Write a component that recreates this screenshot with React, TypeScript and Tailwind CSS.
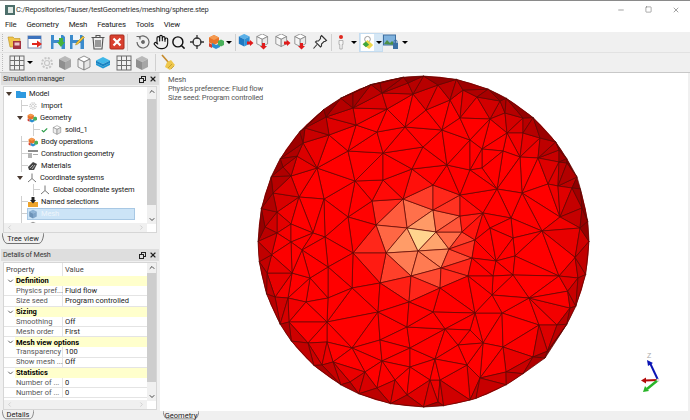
import { Hand, Search, ChevronDown, ChevronUp, ChevronLeft, ChevronRight, X, Check, Minus, Square } from "lucide-react";
import type { ReactNode } from "react";

type P = [number, number];

const CX = 423.5;
const CY = 241.5;
const R = 165.5;

// vertices read off the reference
const seed: P[] = [
	[407,228],[433,210],[403,199],[372,201],[376,225],[386,253],[418,251],[436,232],[449,249],[441,268],[411,276],[460,216],[462,232],[472,258],[468,276],[433,185],[383,180],[353,253],[380,283],[440,288],[460,195],[475,240],
	[355,181],[324,199],[299,197],[348,217],[325,237],[291,224],[277,212],[291,176],[317,168],[348,151],[383,153],[412,169],[447,165],[423,147],[405,127],[377,132],[356,125],[329,135],[303,143],[283,167],[387,109],[353,108],[326,117],[305,128],[426,110],[442,130],[460,118],[413,94],[382,93],[353,93],[438,85],[408,83],[380,83],[450,100],[463,90],[277,233],[265,227],[273,193],[291,242],[313,233],
	[490,119],[505,113],[477,97],[500,101],[523,118],[507,133],[523,133],[540,138],[559,150],[538,158],[520,157],[503,151],[482,149],[470,140],[482,168],[522,193],[548,184],[558,186],[559,162],[572,188],[577,177],[567,163],[560,217],[582,208],[511,218],[542,231],[497,189],[483,213],[470,170],[490,228],[513,238],[580,228],
	[496,261],[515,256],[493,276],[529,298],[559,276],[578,278],[513,275],[502,313],[475,313],[483,343],[503,347],[539,325],[557,325],[570,308],[533,357],[506,372],[480,378],[470,400],[492,295],[545,358],
	[378,312],[352,288],[328,267],[328,298],[310,278],[292,273],[288,298],[275,297],[306,302],[327,322],[289,322],[352,348],[380,340],[407,327],[410,348],[382,361],[410,367],[435,359],[445,329],[433,312],[409,302],[458,345],[470,330],[327,342],[308,343],[333,362],[350,382],[365,372],[395,380],[430,380],[377,388],[407,395],[438,402],[322,365],[302,250],[467,365],[267,273],[440,380],
];

const near = (list: P[], p: P, d: number) => list.some((q) => Math.hypot(q[0] - p[0], q[1] - p[1]) < d);

function buildPoints(): P[] {
	const pts: P[] = [];
	for (const p of seed) if (!near(pts, p, 3)) pts.push(p);
	for (let a = 0; a < 360; a += 13) {
		const t = ((a + 6) * Math.PI) / 180;
		const p: P = [CX + (R - 13) * Math.cos(t), CY + (R - 13) * Math.sin(t)];
		if (!near(pts, p, 14)) pts.push(p);
	}
	for (let a = 0; a < 360; a += 10) {
		const t = ((a + ((a / 10) % 3) * 1.5) * Math.PI) / 180;
		pts.push([CX + R * Math.cos(t), CY + R * Math.sin(t)]);
	}
	return pts;
}

function triangulate(pts: P[]) {
	const n = pts.length;
	const all: P[] = [...pts, [-3000, -3000], [4000, -3000], [500, 5000]];
	let tris: number[][] = [[n, n + 1, n + 2]];
	const inCircle = (t: number[], p: P) => {
		const [a, b, c] = t.map((i) => all[i]);
		const ax = a[0] - p[0], ay = a[1] - p[1];
		const bx = b[0] - p[0], by = b[1] - p[1];
		const cx = c[0] - p[0], cy = c[1] - p[1];
		const det = (ax * ax + ay * ay) * (bx * cy - cx * by) - (bx * bx + by * by) * (ax * cy - cx * ay) + (cx * cx + cy * cy) * (ax * by - bx * ay);
		const area = (b[0] - a[0]) * (c[1] - a[1]) - (b[1] - a[1]) * (c[0] - a[0]);
		return area > 0 ? det > 0 : det < 0;
	};
	for (let i = 0; i < n; i++) {
		const bad = tris.filter((t) => inCircle(t, all[i]));
		const edges = new Map<string, number[]>();
		for (const t of bad) {
			for (const [u, v] of [[t[0], t[1]], [t[1], t[2]], [t[2], t[0]]]) {
				const k = u < v ? `${u}-${v}` : `${v}-${u}`;
				if (edges.has(k)) edges.delete(k);
				else edges.set(k, [u, v]);
			}
		}
		tris = tris.filter((t) => !bad.includes(t));
		edges.forEach(([u, v]) => tris.push([u, v, i]));
	}
	return tris.filter((t) => t.every((i) => i < n));
}

const mix = (a: number, b: number, k: number) => Math.round(a + (b - a) * k);

function shade(x: number, y: number, i: number) {
	const d = Math.min(1, Math.hypot(x - CX, y - CY) / R);
	const nz = Math.sqrt(1 - d * d);
	const top = y < CY ? 0.15 * (1 - nz) : 0;
	let v = 0.55 + 0.85 * nz - top + (((i * 37) % 11) - 5) * 0.004;
	v = Math.min(1, v);
	const s = Math.max(0, 1 - Math.hypot(x - 420, y - 240) / 62);
	const k = Math.pow(s, 1.15);
	return `rgb(${mix(255 * v, 255, Math.min(1, k * 2))},${mix(0, 225, k)},${mix(0, 150, k)})`;
}

const meshPoints = buildPoints();
const meshTris = triangulate(meshPoints);

function Sphere() {
	return (
		<svg className="absolute left-0 top-0" width="528" height="338" viewBox="160 73 528 338">
			<circle cx={CX} cy={CY} r={R} fill="#b00000" />
			{meshTris.map((t, i) => {
				const [a, b, c] = t.map((j) => meshPoints[j]);
				return (
					<polygon
						key={i}
						points={`${a[0]},${a[1]} ${b[0]},${b[1]} ${c[0]},${c[1]}`}
						fill={shade((a[0] + b[0] + c[0]) / 3, (a[1] + b[1] + c[1]) / 3, i)}
						stroke="#5c0a06"
						strokeWidth="0.7"
						strokeLinejoin="round"
					/>
				);
			})}
		</svg>
	);
}

function Triad() {
	return (
		<svg className="absolute left-[476px] top-[277px]" width="32" height="46" viewBox="0 0 32 46">
			<text x="11" y="8" fontSize="7" fill="#aaa" fontFamily="Liberation Sans, sans-serif">Z</text>
			<path d="M22 30 L14 13" stroke="#0a14b4" strokeWidth="2" />
			<path d="M11 10 L17 13 L12 16Z" fill="#0a14b4" />
			<path d="M22 30 L9 30.500" stroke="#b40a0a" strokeWidth="2" />
			<path d="M5 30.500 L10 27.500 L10 33.500Z" fill="#b40a0a" />
			<path d="M22 30 L11 39" stroke="#28b428" strokeWidth="2.500" />
			<path d="M7 42 L9 36 L13 41Z" fill="#28b428" />
			<circle cx="22" cy="30" r="1.500" fill="#ddd" />
		</svg>
	);
}

const Floppy = ({ children }: { children: ReactNode }) => (
	<svg width="16" height="16" viewBox="0 0 16 16">
		<path d="M1 1h12l2 2v12H1z" fill="#3b8bcc" />
		<rect x="4" y="1" width="7" height="5" fill="#eef5fb" />
		<rect x="3.500" y="9" width="8" height="6" fill="#e2edf7" />
		{children}
	</svg>
);

const Cube = ({ top, left, right, wire }: { top: string; left: string; right: string; wire?: boolean }) => (
	<g stroke={wire ? "#777" : "none"} strokeWidth="0.8">
		<path d="M8 1l6 3-6 3-6-3z" fill={top} />
		<path d="M2 4l6 3v8l-6-3z" fill={left} />
		<path d="M14 4l-6 3v8l6-3z" fill={right} />
	</g>
);

const CubeIcon = (props: { top: string; left: string; right: string; wire?: boolean; size?: number }) => (
	<svg width={props.size ?? 16} height={props.size ?? 16} viewBox="0 0 16 16">
		<Cube {...props} />
	</svg>
);

const Blocks = ({ size = 16 }: { size?: number }) => (
	<svg width={size} height={size} viewBox="0 0 16 16">
		<path d="M6 1l5 2.500v5L6 11 1 8.500v-5z" fill="#e8742a" />
		<path d="M1 3.500l5 2.500 5-2.500-5-2.500z" fill="#f59a4f" />
		<path d="M4 9l4 2v4l-4-2zM8 11l4-2v4l-4 2z" fill="#2b8fd0" />
		<path d="M10 7l3-1.500L16 7v4l-3 1.500L10 11z" fill="#49b05a" />
		<path d="M1 9l3 1.500V14l-3-1.500z" fill="#d33c30" />
	</svg>
);

const GridIcon = () => (
	<svg width="16" height="16" viewBox="0 0 16 16" fill="none" stroke="#6d6d6d" strokeWidth="1">
		<rect x="1" y="1" width="14" height="14" />
		<path d="M5.500 1v14M10.500 1v14M1 5.500h14M1 10.500h14" />
	</svg>
);

const GrayCube = () => <CubeIcon top="#b9b9b9" left="#8f8f8f" right="#a6a6a6" />;

const Gear = ({ size = 16 }: { size?: number }) => (
	<svg width={size} height={size} viewBox="0 0 16 16" fill="none" stroke="#c6c6c6" strokeWidth="1.200">
		<circle cx="8" cy="8" r="2.500" />
		<circle cx="8" cy="8" r="5" strokeDasharray="2 1.400" strokeWidth="2" />
	</svg>
);

const ArrowCube = ({ solid, down }: { solid?: boolean; down?: boolean }) => (
	<svg width="16" height="16" viewBox="0 0 16 16">
		<g transform="translate(-1 -1) scale(0.9)">
			{solid ? (
				<Cube top="#5ab0e8" left="#1e78c2" right="#2f91d6" />
			) : (
				<Cube top="#fff" left="#f4f4f4" right="#e8e8e8" wire />
			)}
		</g>
		{down ? (
			<path d="M6 9h3v3h2l-3.500 3.500L4 12h2z" fill="#e01a1a" />
		) : (
			<path d="M9 7.500h3V6l3.500 3L12 12v-1.500H9z" fill="#e01a1a" />
		)}
	</svg>
);

const Caret = ({ className = "" }: { className?: string }) => (
	<span className={`h-0 w-0 border-x-[3px] border-t-[3px] border-x-transparent border-t-black ${className}`} />
);

const Sep = ({ className = "" }: { className?: string }) => <span className={`h-[17px] w-px bg-[#d0d0d0] ${className}`} />;

const Grip = () => <span className="ml-[2px] h-[17px] w-[2px] border-l border-dotted border-[#bbb]" />;

function ToolbarOne() {
	return (
		<div className="flex h-[20px] items-center bg-[#f0f0f0]">
			<Grip />
			<svg className="ml-[3px]" width="16" height="16" viewBox="0 0 16 16">
				<path d="M1 3h5l1.500 1.500H13V13H3z" fill="#f1c64c" stroke="#b98f20" strokeWidth="0.600" />
				<rect x="6" y="7" width="8" height="8" fill="#a3323f" />
				<rect x="7.500" y="8.500" width="5" height="3" fill="#ecc7cc" />
			</svg>
			<svg className="ml-[4px]" width="16" height="16" viewBox="0 0 16 16">
				<rect x="1" y="2" width="13" height="12" fill="#fff" stroke="#7a8db0" />
				<rect x="1" y="2" width="13" height="3" fill="#3d73bd" />
				<path d="M5 9h5V6.500l5 3.500-5 3.500V11H5z" fill="#e0281e" />
			</svg>
			<span className="ml-[7px]">
				<Floppy>
					<path d="M9 4h4v4h2l-4 5-4-5h2z" fill="#46b23c" />
				</Floppy>
			</span>
			<span className="ml-[3px]">
				<Floppy>
					<path d="M14 2l1.500 1.500L9 10l-2.500 1 1-2.500z" fill="#eec23c" stroke="#8a6d14" strokeWidth="0.400" />
				</Floppy>
			</span>
			<svg className="ml-[5px]" width="16" height="16" viewBox="0 0 16 16" fill="#ececec" stroke="#555" strokeWidth="1.100">
				<path d="M1.500 3.500h13M6 3.500V1.500h4v2" fill="none" />
				<path d="M3 3.500l1 11.500h8l1-11.500z" />
				<path d="M6 6v7M8 6v7M10 6v7" />
			</svg>
			<svg className="ml-[3px]" width="16" height="16" viewBox="0 0 16 16">
				<rect x="1" y="1" width="14" height="14" rx="1" fill="#d9402f" stroke="#a62a1d" />
				<path d="M4.500 4.500l7 7M11.500 4.500l-7 7" stroke="#fff" strokeWidth="2.200" />
			</svg>
			<Sep className="ml-[2px]" />
			<svg className="ml-[7px]" width="16" height="16" viewBox="0 0 16 16" fill="none" stroke="#666" strokeWidth="1.200">
				<path d="M4 3.500A6 6 0 1 1 2 8" />
				<path d="M1.500 2.500h3.500v3" />
				<circle cx="8" cy="8" r="1.300" fill="#666" />
			</svg>
			<Hand className="ml-[2px]" size={16} strokeWidth={1.700} color="#111" />
			<Search className="ml-[2px]" size={15} strokeWidth={2.300} color="#111" />
			<svg className="ml-[3px]" width="16" height="16" viewBox="0 0 16 16" fill="none" stroke="#333" strokeWidth="1.300">
				<circle cx="8" cy="8" r="4" />
				<path d="M8 1v4M8 11v4M1 8h4M11 8h4" />
			</svg>
			<span className="ml-[3px]">
				<Blocks />
			</span>
			<Caret className="ml-[2px]" />
			<Sep className="ml-[3px]" />
			<span className="ml-[2px]">
				<ArrowCube solid />
			</span>
			<span className="ml-[2px]">
				<ArrowCube down />
			</span>
			<span className="ml-[3px]">
				<ArrowCube />
			</span>
			<span className="ml-[3px]">
				<ArrowCube down />
			</span>
			<svg className="ml-[2px]" width="16" height="16" viewBox="0 0 16 16" fill="#f4f4f4" stroke="#333" strokeWidth="1.100">
				<path d="M9.500 1.500l5 5-1.500 1-1 0-2.500 2.500 0 2-1 1-5-5 1-1 2 0L8.500 4.500l0-1.500z" />
				<path d="M5 10.500L1.500 14.500" fill="none" />
			</svg>
			<Sep className="ml-[3px]" />
			<svg className="ml-[1px]" width="16" height="16" viewBox="0 0 16 16">
				<circle cx="8" cy="3" r="2" fill="#e0281e" />
				<path d="M6 6.500h4v4h-.800V15H6.800v-4.500H6z" fill="#f6f6f6" stroke="#999" strokeWidth="0.700" />
			</svg>
			<Caret className="ml-[2px]" />
			<span className="ml-[2px] flex h-[19px] w-[24px] items-center border border-[#c4dcf0] bg-[#d5e7f5] pl-[1px]">
				<svg className="bg-white" width="15" height="17" viewBox="0 0 16 18">
					<circle cx="8" cy="5" r="3.500" fill="#fff" stroke="#888" />
					<path d="M2 11l6-5 7 6-5 5z" fill="#eed84a" />
					<path d="M2 11l4-3.300 4 4-4 3z" fill="#3ea63e" />
				</svg>
				<Caret className="ml-[2px]" />
			</span>
			<svg className="ml-[0px]" width="16" height="16" viewBox="0 0 16 16">
				<rect x="0.500" y="1" width="12" height="10" fill="#7fb2de" stroke="#3f6f9f" />
				<path d="M1 10l3-4 3 3 2-2 3 3v1z" fill="#4c8f45" />
				<path d="M10 9h5v6h-5z" fill="#3a6fa4" />
				<path d="M11 9V7.500a1.500 1.500 0 0 1 3 0V9" fill="none" stroke="#3a6fa4" />
			</svg>
			<Caret className="ml-[3px]" />
		</div>
	);
}

function ToolbarTwo() {
	return (
		<div className="flex h-[20px] items-center border-t border-[#e2e2e2] bg-[#f0f0f0]">
			<Grip />
			<span className="ml-[5px]">
				<GridIcon />
			</span>
			<Caret className="ml-[2px]" />
			<span className="ml-[6px]">
				<Gear />
			</span>
			<span className="ml-[2px]">
				<GrayCube />
			</span>
			<span className="ml-[3px]">
				<CubeIcon top="#fff" left="#f2f2f2" right="#e6e6e6" wire />
			</span>
			<span className="ml-[3px]">
				<svg width="16" height="16" viewBox="0 0 16 16">
					<path d="M8 2l7 3.500L8 9 1 5.500z" fill="#3fb7e8" />
					<path d="M1 8l7 3.500L15 8v2l-7 3.500L1 10z" fill="#1e97d4" />
					<path d="M1 5.500L8 9l7-3.500V8l-7 3.500L1 8z" fill="#1a84c2" />
				</svg>
			</span>
			<span className="ml-[5px]">
				<GridIcon />
			</span>
			<span className="ml-[2px]">
				<GrayCube />
			</span>
			<Sep className="ml-[5px]" />
			<svg className="ml-[3px]" width="18" height="18" viewBox="0 0 18 18">
				<path d="M3 1l7 8" stroke="#c58a2b" strokeWidth="1.600" />
				<path d="M8 8l4-2 4 5-5 5-5-3z" fill="#eec74c" />
				<path d="M9 14l4-4M12 15l3-3" stroke="#b58f25" strokeWidth="0.700" />
			</svg>
		</div>
	);
}

function PanelTitle({ label }: { label: string }) {
	return (
		<div className="mx-[1px] flex h-[12px] shrink-0 items-center justify-between bg-[#dedede] px-[2px] text-[7.200px] tracking-[-0.150px] text-[#333]">
			<span>{label}</span>
			<span className="flex items-center gap-[3px]">
				<svg width="7" height="7" viewBox="0 0 7 7" fill="none" stroke="#222">
					<rect x="2.500" y="0.500" width="4" height="4" strokeWidth="1" />
					<rect x="0.500" y="2.500" width="4" height="4" fill="#dedede" strokeWidth="1" />
				</svg>
				<X size={8} strokeWidth={3.500} color="#222" />
			</span>
		</div>
	);
}

function Tab({ label, width, height }: { label: string; width: string; height: string }) {
	return (
		<div className={`relative flex items-center justify-center text-[7.500px] text-[#222] ${width} ${height}`}>
			<svg className="absolute inset-0" width="100%" height="100%" preserveAspectRatio="none" viewBox="0 0 40 12" fill="none" stroke="#555" strokeWidth="0.800">
				<path d="M0 0C1 6 2 10 5 10.500H35C38 10 39 6 40 0" />
			</svg>
			<span className="relative">{label}</span>
		</div>
	);
}

function VScroll({ thumb }: { thumb: string }) {
	return (
		<div className="flex h-full w-[9px] flex-col items-center bg-[#f0f0f0]">
			<ChevronUp className="h-[9px] shrink-0" size={8} strokeWidth={3} color="#444" />
			<div className={`w-full bg-[#cdcdcd] ${thumb}`} />
			<div className="flex-1" />
			<ChevronDown className="h-[9px] shrink-0" size={8} strokeWidth={3} color="#444" />
		</div>
	);
}

function HScroll() {
	return (
		<div className="flex h-[9px] shrink-0 items-center justify-between bg-[#f0f0f0] px-[2px]">
			<ChevronLeft size={7} strokeWidth={2.500} color="#c4c4c4" />
			<ChevronRight size={7} strokeWidth={2.500} color="#c4c4c4" />
		</div>
	);
}

const Expander = ({ className = "" }: { className?: string }) => (
	<span className={`h-0 w-0 shrink-0 border-x-[3.500px] border-t-[4px] border-x-transparent border-t-[#4a3a30] ${className}`} />
);

const Elbow = ({ className = "" }: { className?: string }) => (
	<span className={`h-full w-[7px] shrink-0 border-l border-[#cfcfcf] ${className}`}>
		<span className="block h-1/2 border-b border-[#cfcfcf]" />
	</span>
);

const Axes = () => (
	<svg className="shrink-0" width="10" height="10" viewBox="0 0 10 10" fill="none" stroke="#666" strokeWidth="0.900">
		<path d="M5 0.500V5.500L1 9M5 5.500L9 9" />
	</svg>
);

function TreeRow({ icon, label, lead, selected }: { icon: ReactNode; label: string; lead: ReactNode; selected?: boolean }) {
	return (
		<div className="flex h-[12px] shrink-0 items-center text-[7.500px] tracking-[-0.150px] text-[#222]">
			{lead}
			<span className={selected ? "-ml-px flex h-[12px] w-[108px] items-center gap-[3px] border border-[#a8c8e4] bg-[#cce4f7] text-[#eef5fb]" : "flex items-center gap-[3px]"}>
				{icon}
				<span className="whitespace-nowrap">{label}</span>
			</span>
		</div>
	);
}

function Tree() {
	const elbow = <Elbow className="ml-[17px]" />;
	const mini = (top: string, left: string, right: string, wire?: boolean) => <CubeIcon size={10} top={top} left={left} right={right} wire={wire} />;
	return (
		<div className="mx-[3px] flex h-[147px] shrink-0 border border-[#d6d6d6] bg-white">
			<div className="flex min-w-0 flex-1 flex-col">
				<div className="flex min-h-0 flex-1 flex-col overflow-hidden pt-[1px]">
					<TreeRow
						lead={<Expander className="ml-[2px] mr-[4px]" />}
						label="Model"
						icon={
							<svg width="10" height="10" viewBox="0 0 10 10">
								<path d="M0 2h4l1 1h5v6H0z" fill="#2f9ae0" />
							</svg>
						}
					/>
					<TreeRow lead={elbow} label="Import" icon={<Gear size={10} />} />
					<TreeRow lead={<Expander className="ml-[13px] mr-[4px]" />} label="Geometry" icon={<Blocks size={10} />} />
					<TreeRow
						lead={
							<>
								<Elbow className="ml-[29px]" />
								<Check className="ml-[1px] mr-[4px] shrink-0" size={7} strokeWidth={4} color="#2e9e4b" />
							</>
						}
						label="solid_1"
						icon={mini("#fff", "#eee", "#ddd", true)}
					/>
					<TreeRow lead={elbow} label="Body operations" icon={<Blocks size={10} />} />
					<TreeRow
						lead={elbow}
						label="Construction geometry"
						icon={
							<svg width="10" height="10" viewBox="0 0 10 10">
								<path d="M0 1h10v2H0z" fill="#8a8a8a" />
								<path d="M0 4h4v5H0z" fill="#b5b5b5" />
								<path d="M5 5h5v1H5z" fill="#aaa" />
							</svg>
						}
					/>
					<TreeRow
						lead={elbow}
						label="Materials"
						icon={
							<svg width="10" height="10" viewBox="0 0 10 10">
								<path d="M0 6l5-5 4 2-3 6-5 0z" fill="#444" />
								<path d="M2 7l3-3M4 8l3-4" stroke="#ddd" strokeWidth="0.700" />
							</svg>
						}
					/>
					<TreeRow lead={<Expander className="ml-[13px] mr-[4px]" />} label="Coordinate systems" icon={<Axes />} />
					<TreeRow lead={<Elbow className="ml-[29px]" />} label="Global coordinate system" icon={<Axes />} />
					<TreeRow
						lead={elbow}
						label="Named selections"
						icon={
							<svg width="10" height="10" viewBox="0 0 10 10">
								<path d="M0 5h10v5H0z" fill="#eda32a" />
								<path d="M3.500 0h3v3H8L5 6.500 2 3h1.500z" fill="#222" />
							</svg>
						}
					/>
					<TreeRow lead={elbow} label="Mesh" selected icon={mini("#8fb4d6", "#6d93b8", "#7fa4c8")} />
					<TreeRow lead={elbow} label="Mesh visualization" icon={mini("#999", "#666", "#777")} />
				</div>
				<HScroll />
			</div>
			<div className="h-[137px]">
				<VScroll thumb="h-[106px] mt-[3px]" />
			</div>
		</div>
	);
}

const rows: { head?: string; k?: string; v?: string }[] = [
	{ head: "Definition" },
	{ k: "Physics pref...", v: "Fluid flow" },
	{ k: "Size seed", v: "Program controlled" },
	{ head: "Sizing" },
	{ k: "Smoothing", v: "Off" },
	{ k: "Mesh order", v: "First" },
	{ head: "Mesh view options" },
	{ k: "Transparency", v: "100" },
	{ k: "Show mesh ...", v: "Off" },
	{ head: "Statistics" },
	{ k: "Number of ...", v: "0" },
	{ k: "Number of ...", v: "0" },
];

function Details() {
	return (
		<div className="mx-[3px] mt-[1px] flex h-[148px] shrink-0 border border-[#d6d6d6] bg-white">
			<div className="flex min-w-0 flex-1 flex-col">
				<div className="flex h-[13px] shrink-0 items-center text-[7.500px] text-[#444]">
					<span className="h-full w-[59px] border-r border-[#e4e4e4] pl-[2px] leading-[13px]">Property</span>
					<span className="pl-[2px]">Value</span>
				</div>
				<div className="flex min-h-0 flex-1 flex-col overflow-hidden">
					{rows.map((r, i) =>
						r.head ? (
							<div key={i} className="flex h-[10.200px] shrink-0 items-center text-[7.500px] font-bold text-black">
								<ChevronDown className="ml-[2px] w-[9px] shrink-0" size={8} strokeWidth={2.500} color="#444" />
								<span className="flex h-full flex-1 items-center bg-[#ffffcc] pl-[1px]">{r.head}</span>
							</div>
						) : (
							<div key={i} className="flex h-[10.200px] shrink-0 items-center text-[7.500px]">
								<span className="flex h-full w-[59px] items-center border-b border-r border-[#e4e4e4] pl-[12px] text-[#555] whitespace-nowrap">{r.k}</span>
								<span className="flex h-full flex-1 items-center border-b border-[#e4e4e4] pl-[2px] text-[#222]">{r.v}</span>
							</div>
						)
					)}
				</div>
				<HScroll />
			</div>
			<div className="h-[138px]">
				<VScroll thumb="h-[109px] mt-[1px]" />
			</div>
		</div>
	);
}

export default function App() {
	return (
		<div className="flex h-[420px] w-[690px] flex-col overflow-hidden bg-[#f0f0f0] font-['Roboto','Liberation_Sans',sans-serif]">
			<div className="flex h-[18px] shrink-0 items-center border-t border-[#8a8a8a] bg-white pl-[5px] text-[7.500px] tracking-[-0.230px] text-[#333]">
				<svg width="10" height="10" viewBox="0 0 10 10">
					<rect width="10" height="10" fill="#4d6f6b" />
					<rect x="3" y="2" width="5" height="6" fill="#dfe8e4" />
				</svg>
				<span className="ml-[1px] whitespace-nowrap">C:/Repositories/Tauser/testGeometries/meshing/sphere.step</span>
				<span className="ml-auto mr-[10px] flex items-center gap-[20px] text-[#444]">
					<Minus size={8} strokeWidth={1.500} />
					<Square size={7} strokeWidth={1.500} />
					<X size={8} strokeWidth={1.500} />
				</span>
			</div>
			<div className="flex h-[14px] shrink-0 items-center gap-[10px] bg-white pl-[5px] text-[7.800px] tracking-[-0.200px] text-[#222]">
				<span>File</span>
				<span>Geometry</span>
				<span>Mesh</span>
				<span>Features</span>
				<span>Tools</span>
				<span>View</span>
			</div>
			<ToolbarOne />
			<ToolbarTwo />
			<div className="flex min-h-0 flex-1 border-t border-[#c8c8c8]">
				<div className="flex w-[160px] shrink-0 flex-col">
					<PanelTitle label="Simulation manager" />
					<div className="mt-[1px]">
						<Tree />
					</div>
					<div className="ml-[2px] mb-[4px]">
						<Tab label="Tree view" width="w-[42px]" height="h-[12px]" />
					</div>
					<PanelTitle label="Details of Mesh" />
					<Details />
					<div className="ml-[2px]">
						<Tab label="Details" width="w-[32px]" height="h-[10px]" />
					</div>
				</div>
				<div className="flex min-w-0 flex-1 flex-col pr-[2px]">
					<div className="relative h-[338px] shrink-0 bg-white">
						<Sphere />
						<div className="absolute left-[8px] top-[2px] text-[7.500px] leading-[9px] tracking-[-0.150px] text-[#555]">
							<div>Mesh</div>
							<div>Physics preference: Fluid flow</div>
							<div>Size seed: Program controlled</div>
						</div>
						<Triad />
					</div>
					<div className="pl-[3px]">
						<Tab label="Geometry" width="w-[36px]" height="h-[9px]" />
					</div>
				</div>
			</div>
		</div>
	);
}
